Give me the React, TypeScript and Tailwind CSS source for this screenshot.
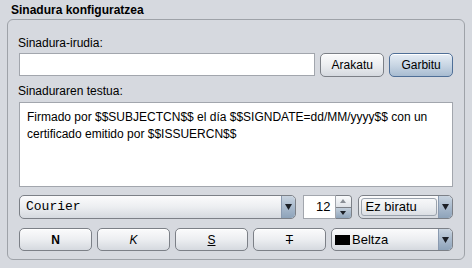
import React from "react";

const base =
  "flex items-center justify-center rounded-[5px] border text-[12px] text-black shadow-[inset_0_1px_0_#ffffff]";
const btn = base + " border-[#7c8087] bg-gradient-to-b from-[#fbfbfc] via-[#eceef1] to-[#d5d9df]";
const btnBlue =
  base + " border-[#4f6f97] bg-gradient-to-b from-[#e6edf5] via-[#c9d6e4] to-[#a8bcd1] shadow-[0_0_0_1px_#b4cbe4]";

function Arrow() {
  return (
    <div className="flex h-full w-[14px] items-center justify-center rounded-r-[4px] border-l border-[#8a9ab0] bg-gradient-to-b from-[#c9d4e0] via-[#a9bacd] to-[#8ea3ba]">
      <svg width="7" height="6" viewBox="0 0 7 6">
        <path d="M0 0 L7 0 L3.5 6 Z" fill="#1b1f26" />
      </svg>
    </div>
  );
}

export default function App() {
  return (
    <div
      className="h-[268px] w-[472px] bg-[#d6d9df] text-black"
      style={{ fontFamily: '"Liberation Sans", Arial, sans-serif' }}
    >
      <div className="px-[11px] pt-[3px] text-[12px] font-bold leading-[15px]">Sinadura konfiguratzea</div>
      <div className="ml-[7px] mt-[1px] h-[241px] w-[458px] rounded-[6px] border border-[#9ea2a8] px-[11px] pt-[16px]">
        <div className="-ml-[1px] text-[12px] leading-[15px]">Sinadura-irudia:</div>
        <div className="mt-[2px] flex h-[24px] gap-[5px]">
          <div className="h-[23px] w-[297px] border border-[#a2a6ad] bg-white" />
          <div className={btn + " h-[24px] w-[64px]"}>Arakatu</div>
          <div className={btnBlue + " h-[24px] w-[64px]"}>Garbitu</div>
        </div>
        <div className="-ml-[1px] mt-[7px] text-[12px] leading-[15px]">Sinaduraren testua:</div>
        <div className="mt-[3px] h-[85px] w-[434px] border border-[#a2a6ad] bg-white px-[7px] pt-[6px] text-[12px] leading-[17px]">
          Firmado por $$SUBJECTCN$$ el día $$SIGNDATE=dd/MM/yyyy$$ con un certificado emitido por $$ISSUERCN$$
        </div>
        <div className="mt-[8px] flex h-[24px]">
          <div className="flex h-[24px] w-[278px] items-stretch overflow-hidden rounded-[5px] border border-[#7c8087] bg-gradient-to-b from-[#fbfbfc] via-[#eceef1] to-[#d5d9df]">
            <div
              className="flex flex-1 items-center pl-[6px] text-[13px]"
              style={{ fontFamily: '"Liberation Mono", "Courier New", monospace' }}
            >
              Courier
            </div>
            <Arrow />
          </div>
          <div className="ml-[7px] flex h-[24px] w-[49px]">
            <div className="flex h-[24px] w-[33px] items-center justify-end border border-[#a2a6ad] bg-white pr-[4px] text-[13px]">12</div>
            <div className="flex h-[24px] w-[16px] flex-col overflow-hidden rounded-r-[4px] border border-l-0 border-[#7c8087]">
              <div className="flex flex-1 items-center justify-center bg-gradient-to-b from-[#fafbfc] to-[#dfe3e8]">
                <svg width="6" height="4" viewBox="0 0 6 4">
                  <path d="M3 0 L6 4 L0 4 Z" fill="#8a8f96" />
                </svg>
              </div>
              <div className="flex flex-1 items-center justify-center border-t border-[#7c8087] bg-gradient-to-b from-[#c3cfdb] to-[#90a5bb]">
                <svg width="6" height="4" viewBox="0 0 6 4">
                  <path d="M0 0 L6 0 L3 4 Z" fill="#1b1f26" />
                </svg>
              </div>
            </div>
          </div>
          <div className="ml-[6px] flex h-[24px] w-[96px] items-stretch overflow-hidden rounded-[5px] border border-[#7c8087] bg-gradient-to-b from-[#fbfbfc] via-[#eceef1] to-[#d5d9df]">
            <div className="my-[2px] ml-[2px] mr-[1px] flex flex-1 items-center rounded-[3px] border border-[#9ba3ad] pl-[4px] text-[13px]">Ez biratu</div>
            <Arrow />
          </div>
        </div>
        <div className="mt-[9px] flex h-[23px] gap-[5px]">
          <div className={btn + " h-[23px] w-[73px] font-bold text-[#111]"}>N</div>
          <div className={btn + " h-[23px] w-[73px] italic"}>K</div>
          <div className={btn + " h-[23px] w-[73px] underline"}>S</div>
          <div className={btn + " h-[23px] w-[73px]"}>
            <span className="line-through">T</span>
          </div>
          <div className="flex h-[23px] w-[122px] items-stretch overflow-hidden rounded-[5px] border border-[#7c8087] bg-gradient-to-b from-[#fbfbfc] via-[#eceef1] to-[#d5d9df]">
            <div className="flex flex-1 items-center gap-[2px] pl-[3px] text-[13px]">
              <span className="inline-block h-[10px] w-[15px] bg-black" />
              Beltza
            </div>
            <Arrow />
          </div>
        </div>
      </div>
    </div>
  );
}
